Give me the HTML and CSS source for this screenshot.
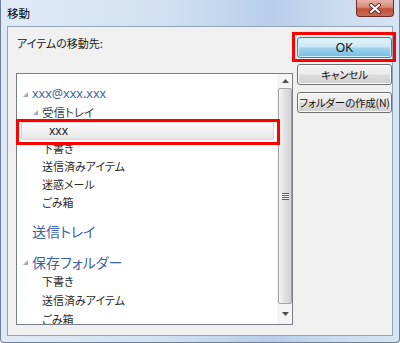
FILE: index.html
```html
<!DOCTYPE html>
<html lang="ja">
<head>
<meta charset="utf-8">
<title>移動</title>
<link rel="stylesheet" href="styles.css">
</head>
<body>
    <div class="window">
        <div class="titlebar">
            <span class="title">移動</span>
            <div class="close">
                <svg width="14" height="11" viewBox="0 0 14 11">
                    <path d="M3 2 L11 9 M11 2 L3 9" stroke="#5a2a22" stroke-width="4" stroke-linecap="round"/>
                    <path d="M3 2 L11 9 M11 2 L3 9" stroke="#fff" stroke-width="2.2" stroke-linecap="round"/>
                </svg>
            </div>
        </div>

        <div class="client">
            <div class="main">
                <div class="caption">アイテムの移動先:</div>
                <div class="listbox">
                    <div class="tree">
                        <div class="row acct"><span class="exp"><svg width="5" height="5" viewBox="0 0 5 5"><polygon points="5,0 5,5 0,5" fill="#a8a8a8"/></svg></span>xxx@xxx.xxx</div>
                        <div class="row lvl1"><span class="exp"><svg width="5" height="5" viewBox="0 0 5 5"><polygon points="5,0 5,5 0,5" fill="#a8a8a8"/></svg></span>受信トレイ</div>
                        <div class="row sel">xxx</div>
                        <div class="row lvl2">下書き</div>
                        <div class="row lvl2">送信済みアイテム</div>
                        <div class="row lvl2">迷惑メール</div>
                        <div class="row lvl2">ごみ箱</div>
                        <div class="row top outbox">送信トレイ</div>
                        <div class="row top store"><span class="exp"><svg width="5" height="5" viewBox="0 0 5 5"><polygon points="5,0 5,5 0,5" fill="#a8a8a8"/></svg></span>保存フォルダー</div>
                        <div class="row lvl2 tall">下書き</div>
                        <div class="row lvl2 tall">送信済みアイテム</div>
                        <div class="row lvl2 tall cut">ごみ箱</div>
                    </div>
                    <div class="scrollbar">
                        <div class="sb-up"><svg width="7" height="4" viewBox="0 0 7 4"><polygon points="3.5,0 7,4 0,4" fill="#505050"/></svg></div>
                        <div class="sb-thumb"><span class="grip"></span></div>
                        <div class="sb-down"><svg width="7" height="4" viewBox="0 0 7 4"><polygon points="0,0 7,0 3.5,4" fill="#505050"/></svg></div>
                    </div>
                </div>
            </div>

            <div class="buttons">
                <button type="button" class="btn ok">OK</button>
                <button type="button" class="btn cancel">キャンセル</button>
                <button type="button" class="btn">フォルダーの作成(N)</button>
            </div>
        </div>
    </div>
</body>
</html>
```

FILE: styles.css
```css
body {
    margin: 0;
    width: 400px;
    height: 343px;
    overflow: hidden;
    font-family: "Noto Sans CJK JP", "Noto Sans", sans-serif;
    font-feature-settings: "palt";
    background-color: #fff;
}
.window {
    box-sizing: border-box;
    width: 400px;
    height: 343px;
    border: 1px solid #6f7f94;
    border-top: none;
    border-radius: 0 0 4px 4px;
    background: linear-gradient(to right, #dfeaf6 0%, #d2e1f2 40%, #b7cee9 68%, #cadcef 85%, #d6e4f3 100%);
}
.titlebar {
    height: 26px;
    display: flex;
    align-items: center;
    padding-left: 6px;
}
.title {
    font-size: 11.5px;
    color: #000;
}
.close {
    align-self: flex-start;
    margin-left: auto;
    margin-right: 5px;
    box-sizing: border-box;
    width: 38px;
    height: 17px;
    border: 1px solid #6b2f27;
    border-top: none;
    border-radius: 0 0 4px 4px;
    background: linear-gradient(#eab1a4 0%, #d88a7b 45%, #c4503c 55%, #c86a52 100%);
    display: flex;
    justify-content: center;
    align-items: center;
}
.client {
    height: 310px;
    box-sizing: border-box;
    margin: 0 6px;
    border: 1px solid #94a4b8;
    background-color: #f0f0f0;
    display: flex;
}
.main {
    width: 285px;
    padding: 8px 0 0 8px;
    box-sizing: border-box;
}
.caption {
    font-size: 11px;
    line-height: 16px;
    padding-left: 1px;
    color: #1a1a1a;
}
.listbox {
    margin-top: 22px;
    width: 277px;
    height: 252px;
    box-sizing: border-box;
    border: 1px solid #7a7e86;
    background-color: #fff;
    display: flex;
}
.tree {
    width: 260px;
    padding-top: 11px;
    box-sizing: border-box;
}
.row {
    height: 18px;
    line-height: 18px;
    font-size: 11px;
    color: #2b2b2b;
    white-space: nowrap;
    display: flex;
    align-items: center;
}
.exp {
    width: 9px;
    height: 18px;
    display: flex;
    align-items: center;
    padding-top: 1px;
    box-sizing: border-box;
}
.acct {
    padding-left: 6px;
    font-family: "Noto Sans", sans-serif;
    font-size: 12.5px;
    color: #3a64a6;
}
.lvl1 {
    padding-left: 16px;
    font-size: 11.5px;
    color: #333a44;
}
.lvl2 {
    padding-left: 25px;
}
.sel {
    position: relative;
    box-sizing: border-box;
    margin: 1px 3px -1px 4px;
    padding-left: 27px;
    line-height: 16px;
    border: 1px solid #d4d4d4;
    border-radius: 2px;
    background: linear-gradient(#fbfbfb, #e6e6e6);
    font-family: "Noto Sans", sans-serif;
    font-size: 12px;
    color: #222;
}
/* annotation box */
.sel::after {
    content: "";
    position: absolute;
    left: -6px;
    right: -7px;
    top: -4px;
    bottom: -6px;
    border: 3px solid #f00;
}
.top {
    height: 20px;
    line-height: 20px;
    font-size: 14px;
    color: #3a64a6;
}
.outbox {
    margin-top: 10px;
    padding-left: 15px;
}
.store {
    margin-top: 11px;
    padding-left: 6px;
}
.tall {
    height: 19px;
    line-height: 19px;
}
.cut {
    height: 14px;
    align-items: flex-start;
    overflow: hidden;
}
.scrollbar {
    width: 15px;
    display: flex;
    flex-direction: column;
    background-color: #f4f4f4;
}
.sb-up {
    height: 14px;
    display: flex;
    justify-content: center;
    align-items: center;
    padding-left: 2px;
}
.sb-thumb {
    height: 216px;
    margin: 0 0 0 1px;
    box-sizing: border-box;
    border: 1px solid #a3a3a3;
    border-radius: 2px;
    background: linear-gradient(to right, #f4f4f4 0%, #e4e4e4 40%, #d2d2d2 100%);
    display: flex;
    justify-content: center;
    align-items: center;
}
.grip {
    width: 7px;
    height: 7px;
    background: repeating-linear-gradient(#5a5a5a 0, #5a5a5a 1px, #f4f4f4 1px, #f4f4f4 2px);
}
.sb-down {
    flex: 1;
    display: flex;
    justify-content: center;
    align-items: center;
    padding-left: 2px;
}
.buttons {
    margin-left: 4px;
    padding-top: 10px;
    display: flex;
    flex-direction: column;
}
.btn {
    width: 95px;
    height: 21px;
    margin: 0 0 7px 0;
    padding: 0;
    border: 1px solid #707070;
    border-radius: 3px;
    background: linear-gradient(#f3f3f3 0%, #ebebeb 48%, #dddddd 52%, #cfcfcf 100%);
    box-shadow: inset 0 0 0 1px #fbfbfb;
    font-family: "Noto Sans CJK JP", sans-serif;
    font-feature-settings: "palt";
    font-size: 10.5px;
    letter-spacing: -0.2px;
    white-space: nowrap;
    color: #111;
}
.ok {
    position: relative;
    margin-bottom: 6px;
    border-color: #3c7fb1;
    background: linear-gradient(#e6f4fc 0%, #c9e7f7 48%, #a3d4ef 52%, #76bce2 100%);
    box-shadow: inset 0 0 0 1px #c9f1ff;
    font-family: "Liberation Sans", sans-serif;
    font-size: 12px;
    letter-spacing: 0;
}
/* annotation box */
.ok::after {
    content: "";
    position: absolute;
    left: -6px;
    right: -5px;
    top: -6px;
    bottom: -5px;
    border: 3px solid #f00;
}
```
